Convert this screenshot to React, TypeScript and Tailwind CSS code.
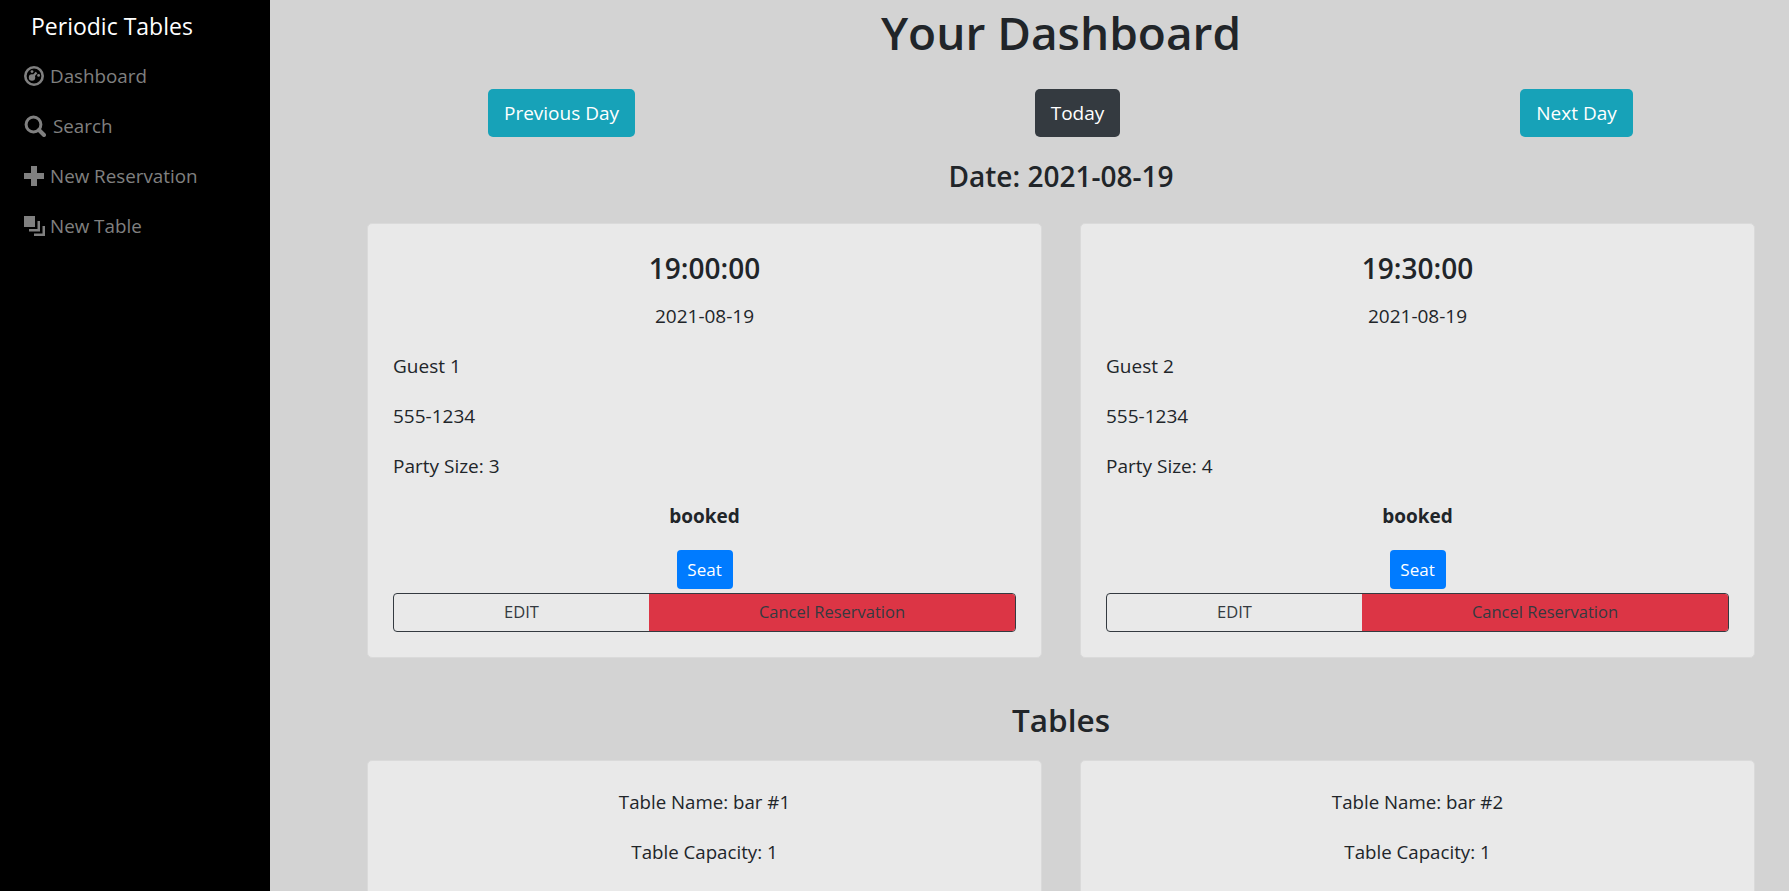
import React from 'react';

const font = "font-['Open_Sans','Liberation_Sans',sans-serif]";

const DashboardIcon = () => (
  <svg width="20" height="20" viewBox="0 0 20 20" fill="none">
    <circle cx="10" cy="10" r="8.7" stroke="#808080" strokeWidth="2.6" />
    <circle cx="8" cy="11.5" r="3.2" fill="#808080" />
    <path d="M9 10.5 L12.5 6.5" stroke="#808080" strokeWidth="2.2" />
    <circle cx="14.6" cy="9.4" r="1.4" fill="#808080" />
    <circle cx="8" cy="5.6" r="1.4" fill="#808080" />
  </svg>
);

const SearchIcon = () => (
  <svg width="22" height="22" viewBox="0 0 22 22" fill="none">
    <circle cx="9.5" cy="9.5" r="7.4" stroke="#808080" strokeWidth="3" />
    <path d="M15 15 L20 20" stroke="#808080" strokeWidth="4" strokeLinecap="round" />
  </svg>
);

const PlusIcon = () => (
  <svg width="20" height="20" viewBox="0 0 20 20">
    <path d="M7 0h6v7h7v6h-7v7H7v-7H0V7h7z" fill="#808080" />
  </svg>
);

const LayersIcon = () => (
  <svg width="21" height="20" viewBox="0 0 21 20">
    <path d="M0 0h11v11H0z" fill="#808080" />
    <path d="M13.5 5H16v10.5H5V13h8.5z" fill="#808080" />
    <path d="M18.5 10H21v10H10v-2.5h8.5z" fill="#808080" />
  </svg>
);

const navItems = [
  { icon: <DashboardIcon />, label: 'Dashboard', gap: 'gap-[6px]' },
  { icon: <SearchIcon />, label: 'Search', gap: 'gap-[7px]' },
  { icon: <PlusIcon />, label: 'New Reservation', gap: 'gap-[6px]' },
  { icon: <LayersIcon />, label: 'New Table', gap: 'gap-[5px]' },
];

const reservations = [
  { time: '19:00:00', name: 'Guest 1', size: 3 },
  { time: '19:30:00', name: 'Guest 2', size: 4 },
];

const tables = ['bar #1', 'bar #2'];

const Sidebar = () => (
  <aside className="w-[270px] shrink-0 bg-black">
    <div className="pl-[31px] pt-[8px] text-[23px] leading-[36px] text-white">Periodic Tables</div>
    <nav className="mt-[7px] flex flex-col">
      {navItems.map((item) => (
        <div key={item.label} className={`flex h-[50px] items-center pl-[24px] text-[18.8px] text-[#808080] ${item.gap}`}>
          {item.icon}
          <span>{item.label}</span>
        </div>
      ))}
    </nav>
  </aside>
);

const ReservationCard = ({ time, name, size }: { time: string; name: string; size: number }) => (
  <div className="h-[435px] w-[675px] rounded-[5px] border border-[#dadada] bg-[#e9e9e9] px-[25px] pt-[26px] text-[19px] text-[#212529]">
    <h5 className="text-center text-[28px] leading-[36px] font-semibold">{time}</h5>
    <p className="mt-[15px] text-center leading-[30px]">2021-08-19</p>
    <p className="mt-[20px] leading-[30px]">{name}</p>
    <p className="mt-[20px] leading-[30px]">555-1234</p>
    <p className="mt-[20px] leading-[30px]">Party Size: {size}</p>
    <p className="mt-[20px] text-center leading-[30px] font-bold">booked</p>
    <div className="mt-[19px] flex justify-center">
      <button className="h-[39px] w-[56px] rounded-[4px] bg-[#007bff] text-[17px] text-white">Seat</button>
    </div>
    <div className="mt-[4px] flex h-[39px] rounded-[4px] border border-[#343a40] text-[16.5px] text-[#343a40]">
      <div className="flex w-[255px] items-center justify-center">EDIT</div>
      <div className="flex flex-1 items-center justify-center rounded-r-[3px] bg-[#dc3545]">Cancel Reservation</div>
    </div>
  </div>
);

export default function App() {
  return (
    <div className={`flex h-[891px] overflow-hidden bg-[#d3d3d3] ${font}`}>
      <Sidebar />
      <main className="min-w-0 flex-1 text-[#212529]">
        <h1 className="ml-[97px] mr-[34px] pt-[2px] text-center text-[46px] leading-[60px] font-semibold">Your Dashboard</h1>
        <div className="mt-[27px] flex justify-between pl-[218px] pr-[156px]">
          <button className="h-[48px] w-[147px] rounded-[5px] bg-[#17a2b8] pt-[1px] text-[19px] text-white">Previous Day</button>
          <button className="h-[48px] w-[85px] rounded-[5px] bg-[#343a40] pt-[1px] text-[19px] text-white">Today</button>
          <button className="h-[48px] w-[113px] rounded-[5px] bg-[#17a2b8] pt-[1px] text-[19px] text-white">Next Day</button>
        </div>
        <h4 className="ml-[97px] mr-[34px] mt-[21px] text-center text-[28px] leading-[36px] font-semibold">Date: 2021-08-19</h4>
        <div className="ml-[97px] mt-[29px] flex gap-[38px]">
          {reservations.map((r) => (
            <ReservationCard key={r.time} {...r} />
          ))}
        </div>
        <h3 className="ml-[97px] mr-[34px] mt-[41px] text-center text-[31.5px] leading-[42px] font-semibold">Tables</h3>
        <div className="ml-[97px] mt-[19px] flex gap-[38px]">
          {tables.map((t) => (
            <div key={t} className="h-[300px] w-[675px] rounded-[5px] border border-[#dadada] bg-[#e9e9e9] pt-[26px] text-center text-[18.7px]">
              <p className="leading-[30px]">Table Name: {t}</p>
              <p className="mt-[20px] leading-[30px]">Table Capacity: 1</p>
            </div>
          ))}
        </div>
      </main>
    </div>
  );
}
